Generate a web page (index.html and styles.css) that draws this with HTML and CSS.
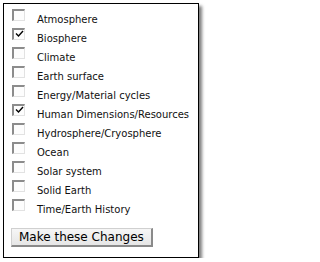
FILE: index.html
```html
<!DOCTYPE html>
<html>
<head>
<meta charset="utf-8">
<link rel="stylesheet" href="styles.css">
</head>
<body>
<div class="panel">
  <ul class="list">
    <li class="item"><span class="box"></span><span class="label">Atmosphere</span></li>
    <li class="item"><span class="box"><svg class="tick" width="9" height="8" viewBox="0 0 9 8"><path d="M1 3.5 L3.5 6 L8 1" fill="none" stroke="#000" stroke-width="1.4"/></svg></span><span class="label">Biosphere</span></li>
    <li class="item"><span class="box"></span><span class="label">Climate</span></li>
    <li class="item"><span class="box"></span><span class="label">Earth surface</span></li>
    <li class="item"><span class="box"></span><span class="label">Energy/Material cycles</span></li>
    <li class="item"><span class="box"><svg class="tick" width="9" height="8" viewBox="0 0 9 8"><path d="M1 3.5 L3.5 6 L8 1" fill="none" stroke="#000" stroke-width="1.4"/></svg></span><span class="label">Human Dimensions/Resources</span></li>
    <li class="item"><span class="box"></span><span class="label">Hydrosphere/Cryosphere</span></li>
    <li class="item"><span class="box"></span><span class="label">Ocean</span></li>
    <li class="item"><span class="box"></span><span class="label">Solar system</span></li>
    <li class="item"><span class="box"></span><span class="label">Solid Earth</span></li>
    <li class="item"><span class="box"></span><span class="label">Time/Earth History</span></li>
  </ul>
  <button class="btn">Make these Changes</button>
</div>
</body>
</html>
```

FILE: styles.css
```css
html, body {
  margin: 0;
  padding: 0;
  background: #fff;
}
body {
  font-family: "DejaVu Sans", Verdana, sans-serif;
}
.panel {
  box-sizing: border-box;
  margin: 3px 0 0 3px;
  width: 196px;
  height: 255px;
  border: 1px solid #000;
  background: #fff;
  box-shadow: 3px 3px 3px rgba(0,0,0,0.5);
  padding: 5px 0 0 8px;
}
.list {
  list-style: none;
  margin: 0;
  padding: 0;
}
.item {
  display: flex;
  align-items: flex-start;
  height: 19px;
}
.box {
  box-sizing: border-box;
  width: 13px;
  height: 12px;
  flex: none;
  border-top: 2px solid #8c8c8c;
  border-left: 2px solid #8c8c8c;
  border-right: 1px solid #e2e2e2;
  border-bottom: 1px solid #e2e2e2;
  background: #fdfdfd;
  position: relative;
}
.tick {
  position: absolute;
  left: 1px;
  top: 0px;
}
.label {
  margin-left: 12px;
  padding-top: 1px;
  font-size: 10px;
  line-height: 19px;
  color: #111;
  white-space: nowrap;
}
.btn {
  margin: 10px 0 0 -1px;
  height: 19px;
  padding: 0 7px;
  font-family: "DejaVu Sans", Verdana, sans-serif;
  font-size: 12px;
  color: #000;
  background: linear-gradient(#f6f6f6, #e6e6e6);
  border-top: 1px solid #d0d0d0;
  border-left: 1px solid #d0d0d0;
  border-right: 2px solid #8a8a8a;
  border-bottom: 2px solid #8a8a8a;
  border-radius: 0;
}
```
